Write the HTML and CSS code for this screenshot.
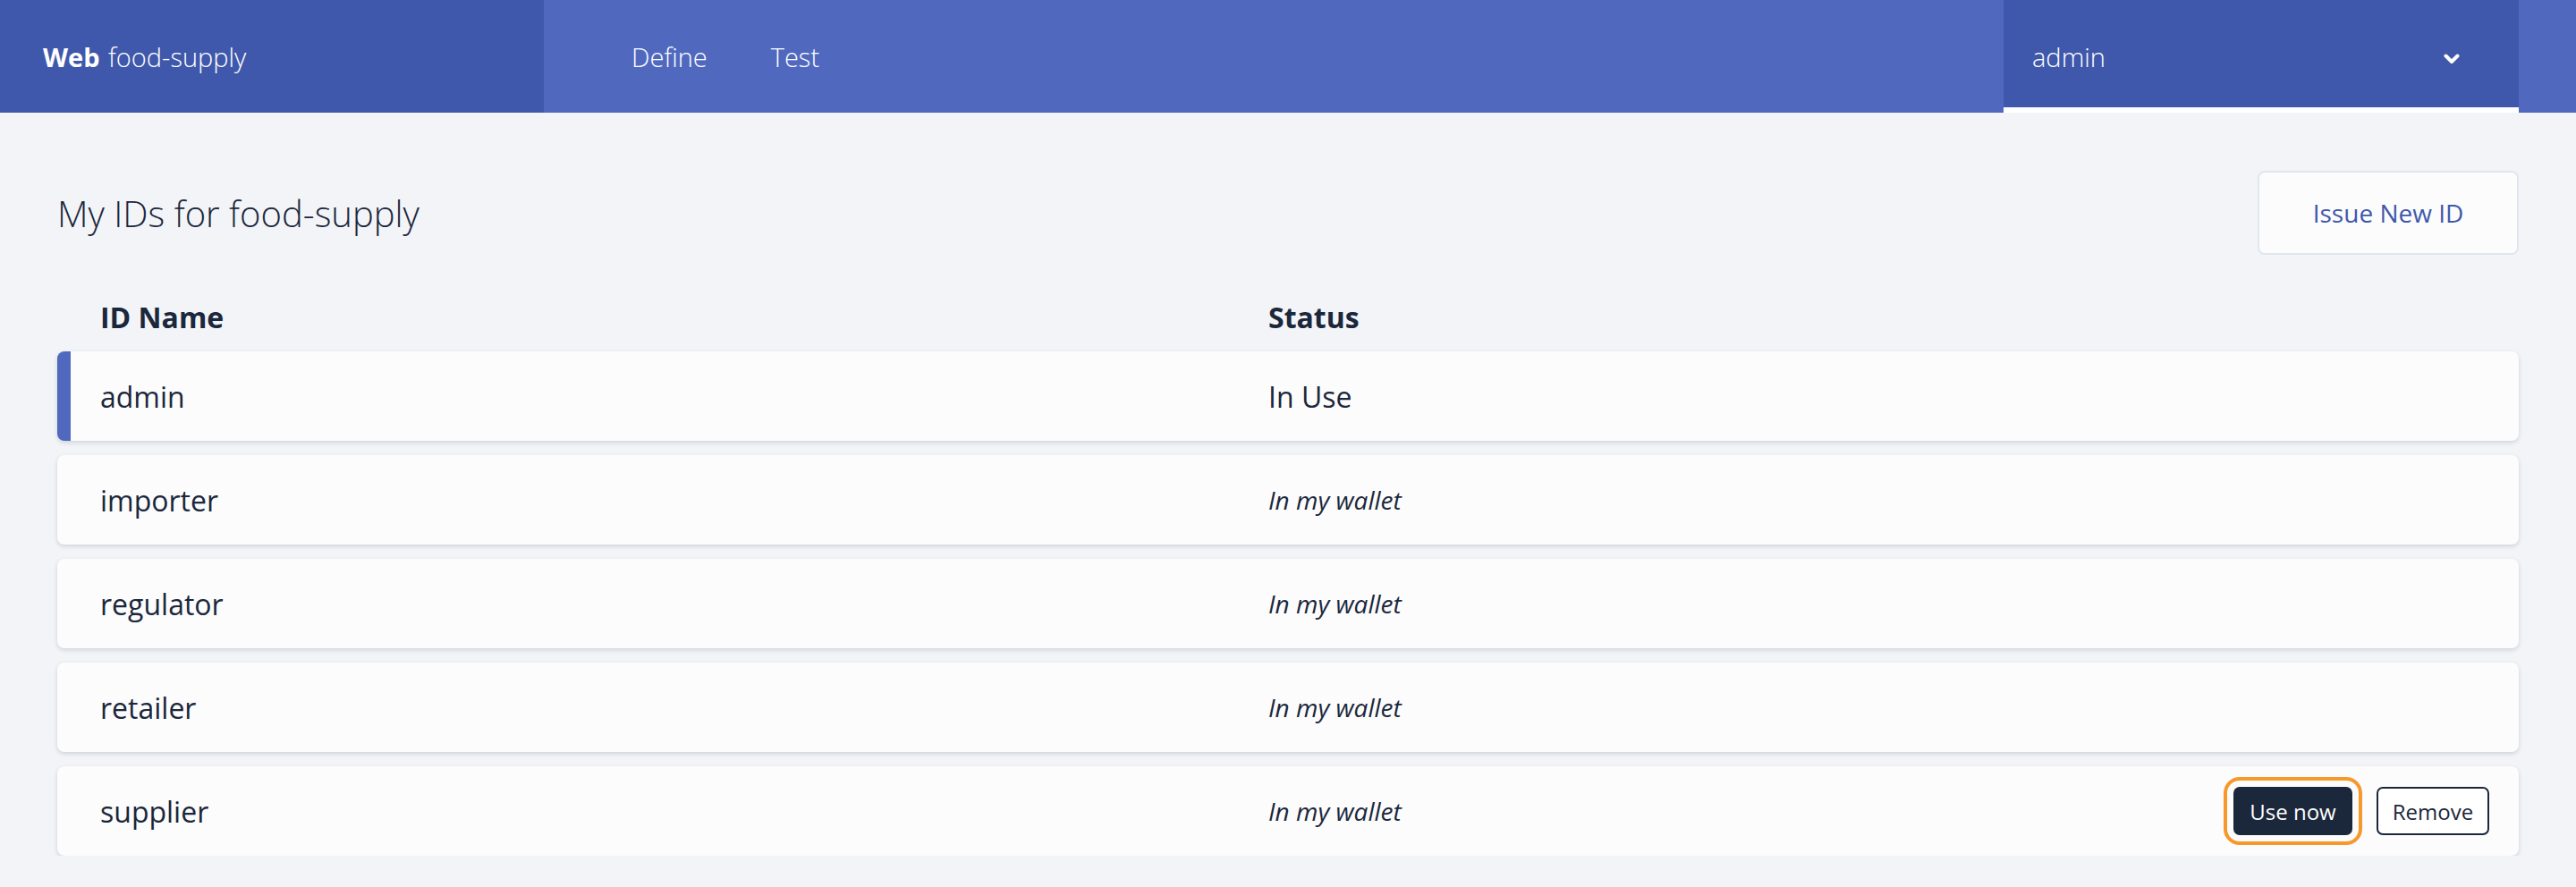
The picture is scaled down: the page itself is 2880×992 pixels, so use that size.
FILE: index.html
```html
<!DOCTYPE html>
<html lang="en">
<head>
<meta charset="utf-8">
<title>My IDs for food-supply</title>
<link rel="stylesheet" href="styles.css">
</head>
<body>
<header class="topbar">
  <div class="brand"><span class="brand-strong">Web</span>&nbsp;<span class="brand-name">food-supply</span></div>
  <nav class="nav">
    <a class="nav-item" href="#">Define</a>
    <a class="nav-item" href="#">Test</a>
  </nav>
  <div class="spacer"></div>
  <div class="user">
    <span class="user-name">admin</span>
    <svg class="chevron" width="18" height="12" viewBox="0 0 18 12"><polyline points="2.5,2.5 9,9 15.5,2.5" fill="none" stroke="#ffffff" stroke-width="4" stroke-linecap="round" stroke-linejoin="round"/></svg>
  </div>
</header>
<main class="main">
  <div class="titlebar">
    <h1 class="title">My IDs for food-supply</h1>
    <button class="issue">Issue New ID</button>
  </div>
  <div class="thead">
    <div>ID Name</div>
    <div>Status</div>
  </div>
  <div class="rows">
    <div class="row active">
      <div class="name">admin</div>
      <div class="status">In Use</div>
      <div></div>
    </div>
    <div class="row">
      <div class="name">importer</div>
      <div class="status wallet">In my wallet</div>
      <div></div>
    </div>
    <div class="row">
      <div class="name">regulator</div>
      <div class="status wallet">In my wallet</div>
      <div></div>
    </div>
    <div class="row">
      <div class="name">retailer</div>
      <div class="status wallet">In my wallet</div>
      <div></div>
    </div>
    <div class="row">
      <div class="name">supplier</div>
      <div class="status wallet">In my wallet</div>
      <div class="actions">
        <button class="btn btn-primary">Use now</button>
        <button class="btn btn-secondary">Remove</button>
      </div>
    </div>
  </div>
</main>
</body>
</html>
```
FILE: styles.css
```css
* { box-sizing: border-box; }
html, body { margin: 0; padding: 0; }
body {
  background: #f2f4f8;
  font-family: "Open Sans", "Noto Sans", sans-serif;
  color: #1b273b;
  width: 2880px;
}
.topbar {
  display: flex;
  height: 126px;
  background: #5069bf;
  color: #ffffff;
}
.brand {
  width: 608px;
  background: #3f58ab;
  padding-left: 48px;
  display: flex;
  align-items: center;
  font-size: 29px;
}
.brand-strong { font-weight: 700; }
.brand-name { font-weight: 300; margin-left: 2px; }
.nav {
  display: flex;
  align-items: center;
  padding-left: 98px;
  gap: 71px;
}
.nav-item {
  color: #ffffff;
  text-decoration: none;
  font-size: 29px;
  font-weight: 300;
}
.spacer { flex: 1; }
.user {
  width: 576px;
  margin-right: 64px;
  background: #3f58ab;
  box-shadow: inset 0 -6px 0 #ffffff;
  display: flex;
  align-items: center;
  justify-content: space-between;
  padding: 0 66px 0 32px;
  font-size: 29px;
  font-weight: 300;
}
.chevron { display: block; margin-top: 6px; }
.main { padding: 65px 64px 0; }
.titlebar {
  display: flex;
  justify-content: space-between;
  align-items: center;
  height: 94px;
}
.title {
  margin: 0;
  font-size: 40px;
  font-weight: 300;
  color: #1b273b;
}
.issue {
  width: 292px;
  height: 94px;
  border: 2px solid #e0e7ec;
  border-radius: 8px;
  background: #fcfcfd;
  color: #3f58ab;
  font-family: "Open Sans", sans-serif;
  font-size: 28px;
  font-weight: 400;
}
.thead {
  margin-top: 48px;
  display: grid;
  grid-template-columns: 1306px 1fr;
  padding: 0 32px 0 48px;
  font-size: 32px;
  font-weight: 700;
  line-height: 44px;
}
.rows {
  margin-top: 16px;
  display: flex;
  flex-direction: column;
  gap: 16px;
}
.row {
  height: 100px;
  background: #fcfcfd;
  border-radius: 8px;
  box-shadow: 0 2px 5px rgba(27, 39, 59, 0.16);
  display: grid;
  grid-template-columns: 1306px 1fr auto;
  align-items: center;
  padding: 0 33px 0 48px;
  font-size: 32px;
}
.row.active {
  border-left: 15px solid #5069bf;
  padding-left: 33px;
}
.wallet {
  font-style: italic;
  font-size: 28px;
}
.actions {
  display: flex;
  gap: 27px;
  align-items: center;
}
.btn {
  height: 54px;
  border-radius: 7px;
  font-family: "Open Sans", sans-serif;
  font-size: 24px;
  padding: 0;
}
.btn-primary {
  width: 133px;
  background: #1b273b;
  color: #ffffff;
  border: none;
  outline: 4px solid #f7982a;
  outline-offset: 7px;
}
.btn-secondary {
  width: 126px;
  background: #ffffff;
  color: #1b273b;
  border: 2px solid #1b273b;
}
```
